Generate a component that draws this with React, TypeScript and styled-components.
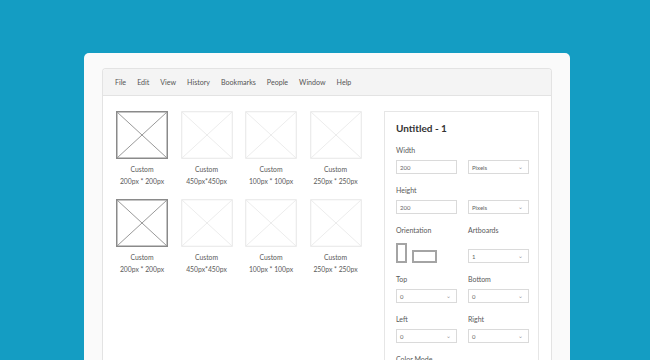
import React from 'react';
import styled, { createGlobalStyle } from 'styled-components';

const GlobalStyle = createGlobalStyle`
    html, body {
        margin: 0;
        padding: 0;
        background: #149dc3;
        overflow: hidden;
    }
    body {
        font-family: Lato, "Noto Sans", sans-serif;
    }
`;

const Page = styled.div`
    box-sizing: border-box;
    width: 650px;
    height: 360px;
    padding: 53px 0 0 84px;
    overflow: hidden;
`;

const Card = styled.div`
    box-sizing: border-box;
    width: 486px;
    height: 360px;
    padding: 15px 18px 0 18px;
    background: #fafafa;
    border-radius: 5px 5px 0 0;
`;

const Window = styled.div`
    box-sizing: border-box;
    width: 450px;
    height: 320px;
    border: 1px solid #e3e3e3;
    border-bottom: none;
    border-radius: 4px 4px 0 0;
    background: #fff;
    display: flex;
    flex-direction: column;
    overflow: hidden;
`;

const MenuBar = styled.div`
    display: flex;
    align-items: center;
    gap: 11px;
    height: 26px;
    padding-left: 12px;
    background: #f4f4f4;
    border-bottom: 1px solid #e3e3e3;
`;

const MenuItem = styled.span`
    font-size: 7.1px;
    color: #555;
`;

const Body = styled.div`
    flex: 1;
    display: flex;
    justify-content: space-between;
    align-items: flex-start;
    padding: 15px 12px 0 13px;
`;

const Grid = styled.div`
    display: grid;
    grid-template-columns: repeat(4, 52px);
    column-gap: 12.5px;
    row-gap: 12px;
`;

const Item = styled.div`
    display: flex;
    flex-direction: column;
    align-items: center;
`;

const Thumb = styled.svg`
    display: block;
    width: 52px;
    height: 48px;
    margin-bottom: 4px;
`;

const Caption = styled.span`
    font-size: 6.8px;
    line-height: 12px;
    color: #5a5a5a;
    white-space: nowrap;
`;

const Panel = styled.div`
    box-sizing: border-box;
    width: 155px;
    height: 260px;
    padding: 9px 11px 0 11px;
    border: 1px solid #e6e6e6;
    border-bottom: none;
`;

const Title = styled.div`
    font-size: 10px;
    line-height: 14px;
    font-weight: 700;
    color: #333;
    margin-bottom: 10px;
`;

const Fields = styled.div`
    display: grid;
    grid-template-columns: 61px 61px;
    column-gap: 11px;
    row-gap: 11px;
`;

const Field = styled.div<{ $wide?: boolean }>`
    display: flex;
    flex-direction: column;
    justify-content: space-between;
    gap: ${p => (p.$wide ? 8 : 5)}px;
`;

const Label = styled.span`
    font-size: 7px;
    line-height: 10px;
    color: #595959;
`;

const Control = styled.div`
    box-sizing: border-box;
    display: flex;
    align-items: center;
    justify-content: space-between;
    height: 14px;
    padding: 0 5px 0 3px;
    border: 1px solid #dadada;
    font-size: 6px;
    color: #666;
`;

const Chevron = styled.span`
    font-size: 6px;
    color: #999;
    transform: translateY(-1px);
`;

const Shapes = styled.div`
    display: flex;
    align-items: flex-end;
    gap: 5px;
`;

const Shape = styled.div<{ $w: number; $h: number }>`
    box-sizing: border-box;
    width: ${p => p.$w}px;
    height: ${p => p.$h}px;
    border: 2px solid #a4a4a4;
`;

const thumbs = [
    { size: '200px * 200px', active: true },
    { size: '450px*450px' },
    { size: '100px * 100px' },
    { size: '250px * 250px' },
    { size: '200px * 200px', active: true },
    { size: '450px*450px' },
    { size: '100px * 100px' },
    { size: '250px * 250px' },
];

const menu = ['File', 'Edit', 'View', 'History', 'Bookmarks', 'People', 'Window', 'Help'];

const Placeholder = ({ active }: { active?: boolean }) => {
    const frame = active ? '#8a8a8a' : '#e6e6e6';
    const cross = active ? '#999' : '#ececec';
    return (
        <Thumb viewBox="0 0 52 48">
            <rect x="0.75" y="0.75" width="50.5" height="46.5" fill="none" stroke={frame} strokeWidth={active ? 1.5 : 1} />
            <line x1="1" y1="1" x2="51" y2="47" stroke={cross} strokeWidth="1" />
            <line x1="51" y1="1" x2="1" y2="47" stroke={cross} strokeWidth="1" />
        </Thumb>
    );
};

const Select = ({ value }: { value: string }) => (
    <Control>
        <span>{value}</span>
        <Chevron>⌄</Chevron>
    </Control>
);

const App = () => {
    return <>
        <GlobalStyle />
        <Page>
            <Card>
                <Window>
                    <MenuBar>
                        {menu.map(m => <MenuItem key={m}>{m}</MenuItem>)}
                    </MenuBar>
                    <Body>
                        <Grid>
                            {thumbs.map((t, i) => (
                                <Item key={i}>
                                    <Placeholder active={t.active} />
                                    <Caption>Custom</Caption>
                                    <Caption>{t.size}</Caption>
                                </Item>
                            ))}
                        </Grid>
                        <Panel>
                            <Title>Untitled - 1</Title>
                            <Fields>
                                <Field>
                                    <Label>Width</Label>
                                    <Control>200</Control>
                                </Field>
                                <Field>
                                    <Label>&nbsp;</Label>
                                    <Select value="Pixels" />
                                </Field>
                                <Field>
                                    <Label>Height</Label>
                                    <Control>200</Control>
                                </Field>
                                <Field>
                                    <Label>&nbsp;</Label>
                                    <Select value="Pixels" />
                                </Field>
                                <Field $wide>
                                    <Label>Orientation</Label>
                                    <Shapes>
                                        <Shape $w={11} $h={20} />
                                        <Shape $w={25} $h={13} />
                                    </Shapes>
                                </Field>
                                <Field $wide>
                                    <Label>Artboards</Label>
                                    <Select value="1" />
                                </Field>
                                <Field>
                                    <Label>Top</Label>
                                    <Select value="0" />
                                </Field>
                                <Field>
                                    <Label>Bottom</Label>
                                    <Select value="0" />
                                </Field>
                                <Field>
                                    <Label>Left</Label>
                                    <Select value="0" />
                                </Field>
                                <Field>
                                    <Label>Right</Label>
                                    <Select value="0" />
                                </Field>
                                <Field>
                                    <Label>Color Mode</Label>
                                </Field>
                            </Fields>
                        </Panel>
                    </Body>
                </Window>
            </Card>
        </Page>
    </>;
};

export default App;
